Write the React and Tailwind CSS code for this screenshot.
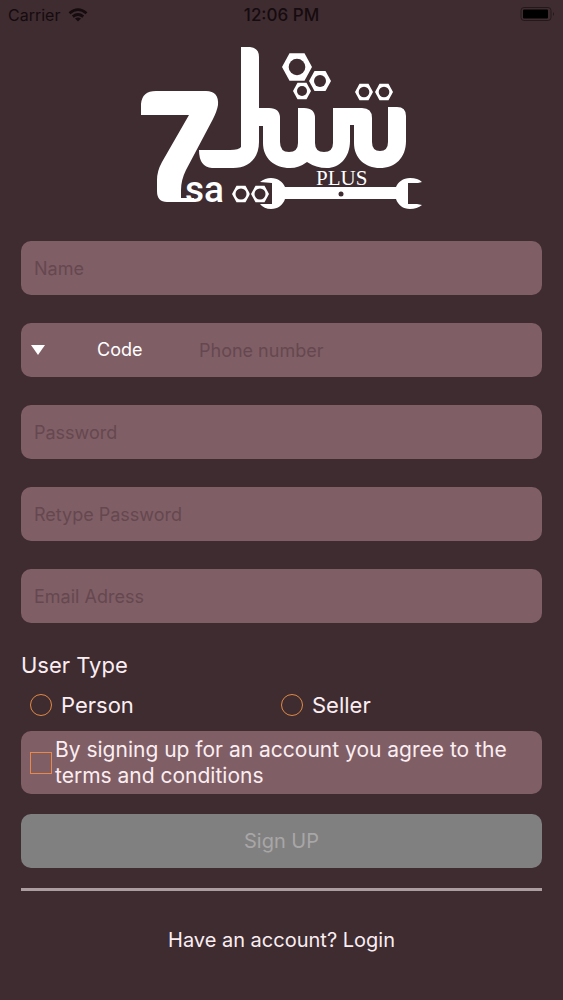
import React, { useState } from 'react';

const hexagon = (cx, cy, r) => {
  const h = r * 0.92;
  return `M${cx - r} ${cy}L${cx - r / 2} ${cy - h}H${cx + r / 2}L${cx + r} ${cy}L${cx + r / 2} ${cy + h}H${cx - r / 2}Z`;
};

const Nut = ({ cx, cy, r, hole }) => (
  <g>
    <path d={hexagon(cx, cy, r)} fill="#fff" />
    <circle cx={cx} cy={cy} r={hole} fill="#3e2c31" />
  </g>
);

const Logo = () => (
  <svg
    viewBox="140 45 284 168"
    className="mx-auto w-[284px] h-[168px]"
    role="img"
    aria-label="7sa Plus"
  >
    {/* seven */}
    <path
      fill="#fff"
      d="M141 115V104Q142 91 156 91H206Q219 91 218 105Q217 111 213 119L186 170Q181 180 181 190V198H194V202H167Q157 202 157 191V180Q157 171 162 162L189 115Z"
    />
    {/* lettering */}
    <path
      fill="#fff"
      d="M241 47H250Q259 48 259 57V108H269Q280 108 280 118V142Q280 152 289 152Q298 152 298 143V108H304Q315 108 315 118V143Q315 152 324 152Q333 152 333 143V108H362Q372 108 372 118V142Q372 151 380 151Q388 151 388 142V107H397Q406 107 406 116V141C406 158 395 168 380 168C365 168 354 158 354 143V125H350V141C350 158 339 168 327 168Q316 168 307 162Q299 168 290 168C274 168 263 158 263 143V126H259V142C259 158 249 168 233 168H212Q199 167 199 150H230Q239 150 241 147Z"
    />
    <Nut cx={297} cy={67} r={15} hole={8.3} />
    <Nut cx={320} cy={81} r={11} hole={6} />
    <Nut cx={302} cy={91} r={9} hole={5} />
    <Nut cx={364} cy={92} r={9} hole={5.3} />
    <Nut cx={384} cy={92} r={9} hole={5.3} />
    {/* wrench */}
    <path
      fill="#fff"
      d="M260 182Q265 178 271 178C278 178 283 182 285 187H396C398 182 403 178 410 178Q418 178 422 182L418 183H408V204H417L422 205Q417 209 410 209C403 209 398 205 396 199H285C283 205 278 209 271 209Q264 209 260 204H272V183Z"
    />
    <circle cx="341" cy="194" r="2.5" fill="#3e2c31" />
    <Nut cx={241} cy={194} r={9} hole={5.5} />
    <path d={hexagon(260, 194, 10.5)} fill="#3e2c31" />
    <Nut cx={260} cy={194} r={9} hole={5.5} />
    <text x="185" y="202" fill="#fff" fontFamily="Roboto" fontSize="37" fontWeight="500">
      sa
    </text>
    <text x="316" y="185" fill="#fff" fontFamily="Liberation Serif" fontSize="21">
      PLUS
    </text>
  </svg>
);

const StatusBar = () => (
  <header className="grid grid-cols-3 items-center h-[30px] px-2 text-base text-[#160b0e]">
    <div className="flex items-center gap-2">
      <span>Carrier</span>
      <svg viewBox="0 0 20 14" className="w-5 h-[14px]" fill="none" stroke="currentColor" strokeWidth="2.8">
        <path d="M1.5 5.2Q10-2 18.5 5.2" />
        <path d="M4.8 8.6Q10 4.4 15.2 8.6" />
        <path d="M7 10.5Q10 8.4 13 10.5L10 13.5Z" fill="currentColor" stroke="none" />
      </svg>
    </div>
    <span className="text-center text-[17px] leading-6 font-medium">12:06 PM</span>
    <svg viewBox="0 0 36 16" className="justify-self-end w-9 h-4">
      <rect x="2" y="0.5" width="30" height="13" rx="3" fill="none" stroke="#25181c" />
      <rect x="4" y="2.5" width="25" height="9" rx="1" fill="#000" />
      <path d="M34 5Q36 7 34 9Z" fill="#25181c" />
    </svg>
  </header>
);

const fieldClass =
  'block w-full h-[54px] px-[13px] rounded-[10px] bg-[#805e66] text-lg text-white placeholder:text-[#65484f] outline-none';

const Field = ({ label, name, type = 'text', value, onChange }) => (
  <input
    type={type}
    name={name}
    aria-label={label}
    placeholder={label}
    value={value}
    onChange={onChange}
    className={fieldClass}
  />
);

const App = () => {
  const [form, setForm] = useState({
    name: '',
    code: '',
    phone: '',
    password: '',
    retype: '',
    email: '',
    userType: '',
    agree: false
  });

  const handleChange = (e) => {
    const { name, value, type, checked } = e.target;
    setForm(prev => ({
      ...prev,
      [name]: type === 'checkbox' ? checked : value
    }));
  };

  return (
    <div className="min-h-screen bg-[#3e2c31] font-['Inter',sans-serif] text-[#fbeef1]">
      <StatusBar />

      <main className="px-[21px] pt-[15px] pb-8">
        <Logo />

        <form onSubmit={(e) => e.preventDefault()}>
          <div className="flex flex-col gap-7 mt-7">
            <Field label="Name" name="name" value={form.name} onChange={handleChange} />

            <div className="flex items-center h-[54px] rounded-[10px] bg-[#805e66]">
              <div className="relative w-[164px] h-full">
                <select
                  name="code"
                  aria-label="Code"
                  value={form.code}
                  onChange={handleChange}
                  className="w-full h-full pl-[76px] appearance-none bg-transparent text-lg text-white outline-none"
                >
                  <option value="">Code</option>
                  <option value="+966">+966</option>
                  <option value="+962">+962</option>
                </select>
                <svg viewBox="0 0 14 10" className="absolute left-[10px] top-[22px] w-[14px] h-[10px] pointer-events-none">
                  <path d="M0 0H14L7 10Z" fill="#fff" />
                </svg>
              </div>
              <input
                type="tel"
                name="phone"
                aria-label="Phone number"
                placeholder="Phone number"
                value={form.phone}
                onChange={handleChange}
                className="flex-1 min-w-0 h-full px-[14px] bg-transparent text-lg text-white placeholder:text-[#65484f] outline-none"
              />
            </div>

            <Field label="Password" name="password" type="password" value={form.password} onChange={handleChange} />
            <Field label="Retype Password" name="retype" type="password" value={form.retype} onChange={handleChange} />
            <Field label="Email Adress" name="email" type="email" value={form.email} onChange={handleChange} />
          </div>

          <fieldset className="mt-7">
            <legend className="text-[22px] leading-7">User Type</legend>
            <div className="grid grid-cols-[251px_1fr] mt-3 pl-[9px] text-[22px] leading-7">
              {['Person', 'Seller'].map(type => (
                <label key={type} className="flex items-center gap-[9px]">
                  <input
                    type="radio"
                    name="userType"
                    value={type}
                    checked={form.userType === type}
                    onChange={handleChange}
                    className="w-[22px] h-[22px] appearance-none rounded-full border border-[#e08a45] checked:bg-[#e08a45]"
                  />
                  {type}
                </label>
              ))}
            </div>
          </fieldset>

          <label className="flex items-center gap-[3px] h-[63px] mt-3 pl-[9px] rounded-[10px] bg-[#805e66] text-[21px] leading-[26px]">
            <input
              type="checkbox"
              name="agree"
              checked={form.agree}
              onChange={handleChange}
              className="shrink-0 w-[22px] h-[22px] appearance-none border border-[#e8894a] checked:bg-[#e8894a]"
            />
            <span>By signing up for an account you agree to the terms and conditions</span>
          </label>

          <button
            type="submit"
            disabled={!form.agree}
            className="block w-full h-[54px] mt-5 rounded-[10px] bg-[#818080] text-xl text-[#a8a6a7]"
          >
            Sign UP
          </button>
        </form>

        <hr className="mt-5 border-0 h-[3px] bg-[#ab9da0]" />

        <p className="mt-[35px] text-center text-xl leading-7">
          Have an account? <a href="#login">Login</a>
        </p>
      </main>
    </div>
  );
};

export default App;
